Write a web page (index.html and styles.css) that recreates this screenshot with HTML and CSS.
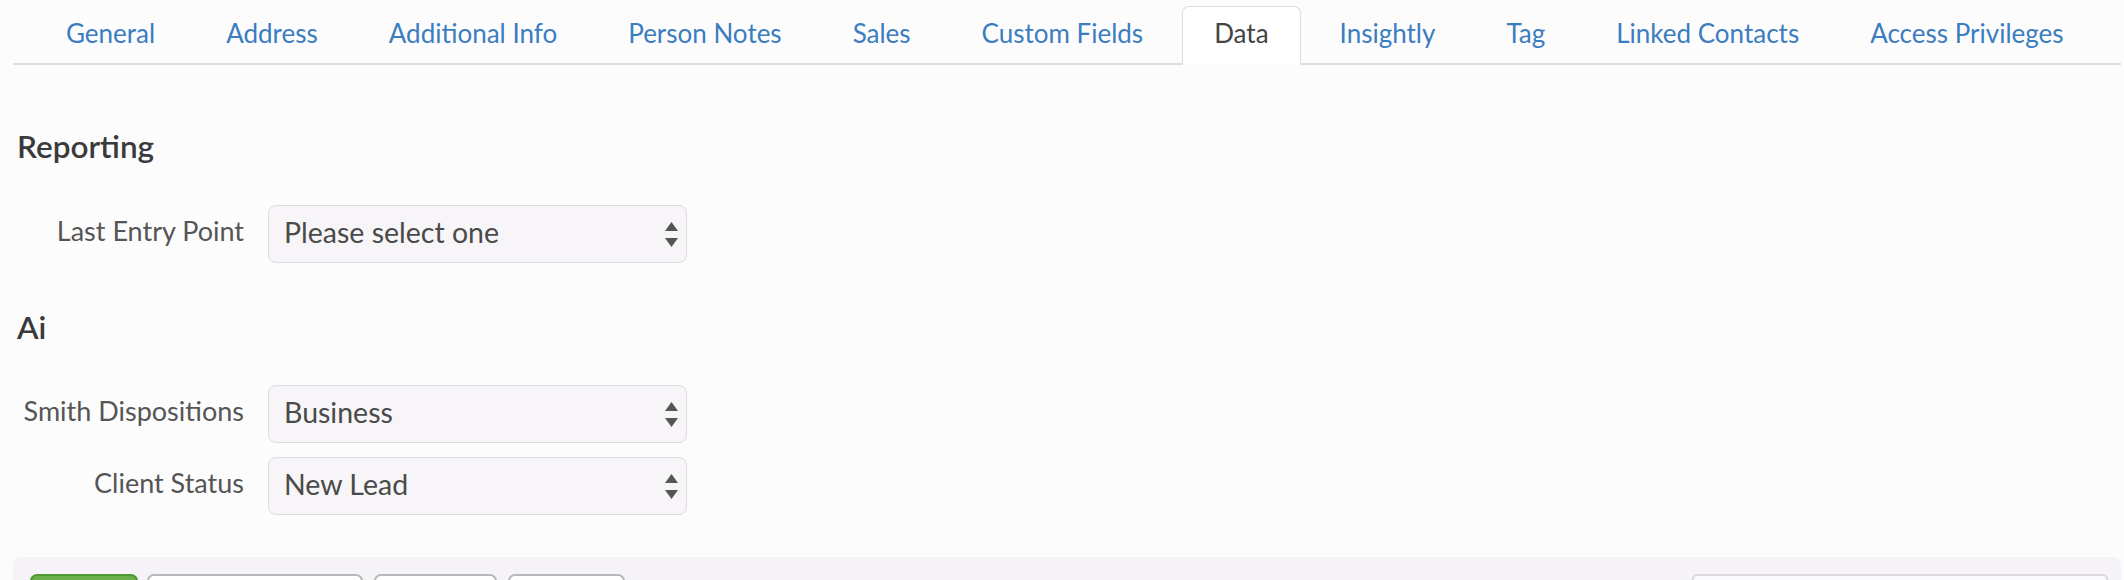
FILE: index.html
```html
<!DOCTYPE html>
<html lang="en">
<head>
<meta charset="utf-8">
<title>Contact - Data</title>
<link rel="stylesheet" href="styles.css">
</head>
<body>
<div class="page">
  <ul class="tabs">
    <li class="tab"><a href="#">General</a></li>
    <li class="tab"><a href="#">Address</a></li>
    <li class="tab"><a href="#">Additional Info</a></li>
    <li class="tab"><a href="#">Person Notes</a></li>
    <li class="tab"><a href="#">Sales</a></li>
    <li class="tab"><a href="#">Custom Fields</a></li>
    <li class="tab active"><a href="#">Data</a></li>
    <li class="tab"><a href="#">Insightly</a></li>
    <li class="tab"><a href="#">Tag</a></li>
    <li class="tab"><a href="#">Linked Contacts</a></li>
    <li class="tab"><a href="#">Access Privileges</a></li>
  </ul>

  <section class="section section-reporting">
    <h3 class="section-title">Reporting</h3>
    <div class="field-row">
      <label class="field-label">Last Entry Point</label>
      <div class="select">
        <span class="select-value">Please select one</span>
        <svg class="select-arrows" width="13" height="25" viewBox="0 0 13 25"><polygon points="6.5,0 13,9 0,9"/><polygon points="0,16 13,16 6.5,25"/></svg>
      </div>
    </div>
  </section>

  <section class="section section-ai">
    <h3 class="section-title">Ai</h3>
    <div class="field-row">
      <label class="field-label">Smith Dispositions</label>
      <div class="select">
        <span class="select-value">Business</span>
        <svg class="select-arrows" width="13" height="25" viewBox="0 0 13 25"><polygon points="6.5,0 13,9 0,9"/><polygon points="0,16 13,16 6.5,25"/></svg>
      </div>
    </div>
    <div class="field-row">
      <label class="field-label">Client Status</label>
      <div class="select">
        <span class="select-value">New Lead</span>
        <svg class="select-arrows" width="13" height="25" viewBox="0 0 13 25"><polygon points="6.5,0 13,9 0,9"/><polygon points="0,16 13,16 6.5,25"/></svg>
      </div>
    </div>
  </section>

  <div class="toolbar">
    <button class="btn btn-save" aria-label="Save"></button>
    <button class="btn btn-default btn-wide" aria-label="Save and Close"></button>
    <button class="btn btn-default btn-mid" aria-label="Cancel"></button>
    <button class="btn btn-default btn-small" aria-label="Delete"></button>
    <div class="toolbar-spacer"></div>
    <div class="toolbar-input"></div>
  </div>
</div>
</body>
</html>
```

FILE: styles.css
```css
html, body {
  margin: 0;
  padding: 0;
  height: 580px;
  overflow: hidden;
  background: #fdfcfd;
}

body {
  font-family: Lato, "Liberation Sans", sans-serif;
  color: #444;
}

.page {
  padding: 6px 3px 0 13px;
}

.tabs {
  list-style: none;
  margin: 0;
  padding: 0 0 0 21px;
  display: flex;
  border-bottom: 2px solid #dedede;
  height: 57px;
}

.tab {
  margin-right: 7px;
}

.tab a {
  box-sizing: border-box;
  display: flex;
  align-items: center;
  height: 57px;
  padding: 0 31px 5px;
  border: 1px solid transparent;
  border-bottom: 0;
  border-radius: 7px 7px 0 0;
  font-size: 26px;
  color: #3a7dc0;
  text-decoration: none;
}

.tab.active a {
  height: 59px;
  padding-bottom: 7px;
  background: #fff;
  border-color: #dcdcdc;
  color: #444;
}

.section-title {
  margin: 0;
  font-size: 31.5px;
  line-height: 34px;
  font-weight: 600;
  color: #3a3a3c;
  padding-left: 4px;
}

.section-reporting .section-title {
  margin-top: 64px;
}

.section-ai .section-title {
  margin-top: 47px;
}

.section .section-title + .field-row {
  margin-top: 42px;
}

.section-ai .section-title + .field-row {
  margin-top: 41px;
}

.field-row {
  display: flex;
  gap: 24px;
  margin-top: 14px;
}

.field-label {
  box-sizing: border-box;
  width: 231px;
  height: 58px;
  display: flex;
  align-items: center;
  justify-content: flex-end;
  padding-bottom: 8px;
  font-size: 27px;
  color: #555;
}

.select {
  box-sizing: border-box;
  width: 419px;
  height: 58px;
  display: flex;
  align-items: center;
  justify-content: space-between;
  padding: 0 8px 0 15px;
  background: #f7f5f8;
  border: 1px solid #dddbe0;
  border-radius: 8px;
}

.select-value {
  font-size: 28.5px;
  color: #4a4a4a;
  padding-bottom: 5px;
}

.select-arrows {
  fill: #555;
  flex: none;
}

.toolbar {
  box-sizing: border-box;
  margin-top: 42px;
  height: 23px;
  overflow: hidden;
  display: flex;
  align-items: flex-start;
  padding: 17px 13px 0 17px;
  background: #f5f3f7;
  border-radius: 8px 8px 0 0;
}

.btn {
  flex: none;
  height: 40px;
  margin-right: 10px;
  border-radius: 7px;
  padding: 0;
}

.btn-save {
  width: 108px;
  margin-right: 9px;
  background: #6aaf48;
  border: 2px solid #4f9a32;
}

.btn-default {
  background: #fff;
  border: 2px solid #b8b8b8;
}

.btn-wide {
  width: 216px;
  margin-right: 11px;
}

.btn-mid {
  width: 123px;
  margin-right: 11px;
}

.btn-small {
  width: 117px;
}

.toolbar-spacer {
  flex: 1;
}

.toolbar-input {
  flex: none;
  width: 416px;
  height: 40px;
  box-sizing: border-box;
  background: #faf9fb;
  border: 2px solid #dad8dc;
  border-radius: 5px;
}
```
